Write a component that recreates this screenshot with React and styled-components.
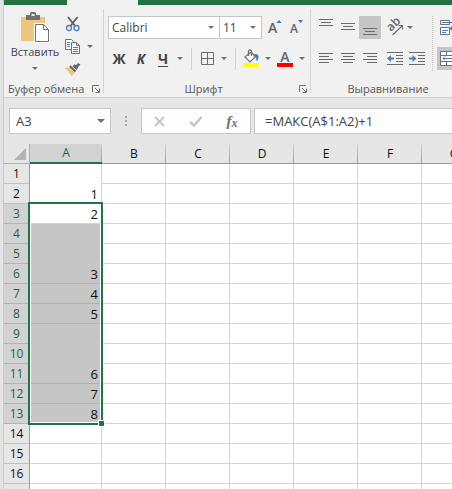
import { useState } from 'react';
import styled, { createGlobalStyle, css } from 'styled-components';

const GlobalStyle = createGlobalStyle`
  *, *::after {
    box-sizing: border-box;
  }

  body {
    margin: 0;
    background: #e4e4e4;
    font-family: "Open Sans", "Noto Sans", sans-serif;
    font-size: 12px;
    color: #444;
  }

  button, input, select {
    font: inherit;
    color: inherit;
  }

  svg {
    flex: none;
    overflow: visible;
  }
`;

const Window = styled.div`
  height: 100vh;
  margin-left: 3px;
  border-left: 1px solid #c8c8c8;
  overflow: hidden;
`;

const TabStrip = styled.div`
  display: flex;
  height: 5px;
  padding-left: 63px;
  background: #217346;
`;

const ActiveTab = styled.div`
  width: 71px;
  background: #f1f1f1;
`;

const Ribbon = styled.div`
  display: flex;
  background: #f1f1f1;
  border-bottom: 1px solid #d0d0d0;
  padding-top: 4px;
`;

const Group = styled.section`
  display: flex;
  flex-direction: column;
  flex: ${(props) => (props.$width ? 'none' : '1')};
  width: ${(props) => props.$width || 'auto'};
  height: 88px;
  padding: ${(props) => props.$padding || '7px 0 0 4px'};
  background: linear-gradient(#d4d4d4, #d4d4d4) right top / 1px 84px no-repeat;
`;

const GroupFooter = styled.div`
  display: flex;
  align-items: center;
  height: 16px;
  margin-top: auto;
  font-size: 11px;
  line-height: 16px;
  color: #555;
`;

const GroupLabel = styled.span`
  flex: 1;
  text-align: ${(props) => props.$align || 'center'};
  white-space: nowrap;
`;

const Body = styled.div`
  display: flex;
`;

const Rows = styled.div`
  display: flex;
  flex-direction: column;
  gap: 8px;
`;

const Row = styled.div`
  display: flex;
  align-items: center;
  height: 23px;
`;

const ToolButton = styled.button`
  display: flex;
  flex: none;
  align-items: center;
  justify-content: center;
  width: ${(props) => props.$width || '22px'};
  height: 23px;
  padding: 0;
  border: none;
  background: ${(props) => (props.$active ? '#c6c6c6' : 'transparent')};
  cursor: pointer;

  &:hover {
    background: #c6c6c6;
  }
`;

const LetterButton = styled(ToolButton)`
  font-size: 14px;
  font-weight: 700;
  line-height: 16px;
  font-style: ${(props) => (props.$italic ? 'italic' : 'normal')};
  text-decoration: ${(props) => (props.$underline ? 'underline' : 'none')};
  text-underline-offset: 2px;
`;

const Divider = styled.span`
  width: 1px;
  height: 22px;
  margin: 0 4px 0 5px;
  background: #d0d0d0;
`;

const DottedDivider = styled.span`
  height: 55px;
  margin: 0 4px;
  border-left: 1px dotted #c4c4c4;
`;

const PasteButton = styled.button`
  display: flex;
  flex-direction: column;
  align-items: center;
  width: 54px;
  height: 66px;
  padding: 0;
  border: none;
  background: none;
  font-size: 11px;
  line-height: 18px;
  cursor: pointer;

  svg:last-child {
    margin-top: 6px;
  }
`;

const ClipboardTools = styled.div`
  display: flex;
  flex-direction: column;
  width: 36px;
`;

const ClipboardRow = styled.div`
  display: flex;
  height: 23px;
`;

const Launcher = styled.button`
  display: flex;
  padding: 0;
  margin-right: 4px;
  border: none;
  background: none;
`;

const SelectBox = styled.label`
  position: relative;
  display: flex;
  align-items: center;
  width: ${(props) => props.$width};
  height: 23px;
  margin-right: ${(props) => (props.$joined ? '-1px' : '3px')};
  border: 1px solid #c6c6c6;
  background: #fff;

  select {
    width: 100%;
    padding: 0 0 0 3px;
    border: none;
    outline: none;
    background: none;
    appearance: none;
  }

  svg {
    position: absolute;
    right: 5px;
    pointer-events: none;
  }
`;

const FormulaBar = styled.div`
  display: flex;
  padding: 10px 0;
  background: #e6e6e6;
`;

const fieldBox = css`
  display: flex;
  align-items: center;
  height: 26px;
  border: 1px solid #c6c6c6;
  background: #fdfdfd;
`;

const NameBox = styled.div`
  ${fieldBox}
  width: 102px;
  margin-left: 5px;

  input {
    flex: 1;
    min-width: 0;
    padding: 0 0 0 6px;
    border: none;
    outline: none;
    background: none;
    font-size: 13px;
  }
`;

const Grip = styled.span`
  display: flex;
  justify-content: center;
  align-items: center;
  width: 30px;
`;

const FormulaTools = styled.div`
  ${fieldBox}
  width: 110px;
  justify-content: space-around;
`;

const FunctionButton = styled(ToolButton)`
  font: italic 700 15px "Liberation Serif", serif;
  color: #707070;

  small {
    font-size: 12px;
    margin-top: 4px;
  }
`;

const FormulaInput = styled.input`
  ${fieldBox}
  flex: 1;
  min-width: 0;
  margin-left: 3px;
  padding: 0 0 0 10px;
  border-right: none;
  outline: none;
  font-size: 13px;
`;

const Sheet = styled.div`
  position: relative;
  background: #fff;
`;

const Grid = styled.table`
  width: max-content;
  table-layout: fixed;
  border-collapse: separate;
  border-spacing: 0;
  font-size: 12px;
  line-height: 18px;
  color: #111;

  td, th {
    height: 20px;
    padding: 0;
    font-weight: 400;
  }
`;

const Corner = styled.th`
  width: 26px;
  background: #e6e6e6;
  border-right: 1px solid #b0b0b0;
  border-bottom: 1px solid #b0b0b0;

  svg {
    display: block;
    margin: 0 3px 0 auto;
  }
`;

const ColumnHead = styled.th`
  width: ${(props) => (props.$selected ? '72px' : '64px')};
  background: linear-gradient(#d0d0d0, #999) right / 1px 100% no-repeat
    ${(props) => (props.$selected ? '#d2d2d2' : '#e6e6e6')};
  border-bottom: ${(props) => (props.$selected ? '2px solid #217346' : '1px solid #999')};
  color: ${(props) => (props.$selected ? '#1e6440' : '#111')};
`;

const RowHead = styled.th`
  background: ${(props) => (props.$selected ? '#d2d2d2' : '#e6e6e6')};
  border-right: 1px solid #999;
  border-bottom: 1px solid ${(props) => (props.$selected ? '#b4b4b4' : '#c0c0c0')};
  color: ${(props) => (props.$selected ? '#1e6440' : '#111')};
`;

const Cell = styled.td`
  text-align: right;
  vertical-align: bottom;
  font-size: 13px;
  background: ${(props) => (props.$selected ? '#c6c6c6' : '#fff')};
  border-right: 1px solid #d4d4d4;
  border-bottom: 1px solid ${(props) => (props.$selected ? '#b0b0b0' : '#d4d4d4')};

  && {
    padding-right: 3px;
  }
`;

const Selection = styled.div`
  position: absolute;
  top: 58px;
  left: 24px;
  width: 75px;
  height: 223px;
  border: 2px solid #217346;
  box-shadow: inset 0 0 0 1px #fff;
  pointer-events: none;

  &::after {
    content: "";
    position: absolute;
    right: -4px;
    bottom: -4px;
    width: 7px;
    height: 7px;
    border: 1px solid #fff;
    background: #217346;
  }
`;

const Arrow = ({ size = 6 }) => (
  <svg width={size} height={size / 2} viewBox="0 0 6 3">
    <path d="M0 0h6L3 3z" fill="#707070" />
  </svg>
);

const Lines = ({ rows }) => (
  <svg width="14" height="17" viewBox="0 0 14 17" shapeRendering="crispEdges">
    {rows.map(([x, y, w]) => (
      <rect key={y} x={x} y={y} width={w} height="1" fill="#6a6a6a" />
    ))}
  </svg>
);

const PasteIcon = () => (
  <svg width="30" height="31" viewBox="0 0 30 31">
    <path d="M1 5h24v24H1z" fill="#edc780" />
    <path d="M6 8V3h4V1l1-1h4l1 1v2h4v5z" fill="#707070" />
    <path d="M11.500 2h3v2h-3z" fill="#f1f1f1" />
    <path d="M15.500 12.500h8l5 5v12h-13z" fill="#fff" stroke="#fff" strokeWidth="3" />
    <path d="M15.500 12.500h8l5 5v12h-13z" fill="#fff" stroke="#707070" />
    <path d="M23.500 12.500v5h5" fill="none" stroke="#707070" />
  </svg>
);

const ScissorsIcon = () => (
  <svg width="16" height="16" viewBox="0 0 16 16" fill="none">
    <path d="M3 1l7 9M12.500 1l-7 9" stroke="#666" strokeWidth="2" />
    <circle cx="4" cy="12" r="2.500" stroke="#4a7ebb" strokeWidth="1.300" />
    <circle cx="11.500" cy="12" r="2.500" stroke="#4a7ebb" strokeWidth="1.300" />
  </svg>
);

const CopyIcon = () => (
  <svg width="16" height="15" viewBox="0 0 16 15">
    <path d="M.5.5h6l2 2v8h-8z" fill="#fff" stroke="#707070" />
    <path d="M2 3.500h3M2 5.500h3M2 7.500h3" stroke="#4a7ebb" />
    <path d="M6.500 3.500h5l3 3v8h-8z" fill="#fff" stroke="#707070" />
    <path d="M11.500 3.500v3h3" fill="none" stroke="#707070" />
    <path d="M8 8.500h5M8 10.500h5M8 12.500h5" stroke="#4a7ebb" />
  </svg>
);

const BrushIcon = () => (
  <svg width="16" height="15" viewBox="0 0 17 15">
    <path d="M0 6l6-1 5 5-3 4-1 .5L4 11l-.5-1.500z" fill="#edc780" />
    <path d="M6 3l6 6-1.500 1.500-6-6z" fill="#666" />
    <path d="M8 4l2-2 1.500 1L14 .5 16.500 2.500 13.500 5l.5 1-2 2z" fill="#666" />
  </svg>
);

const LauncherIcon = () => (
  <svg width="8" height="8" viewBox="0 0 8 8" fill="none" stroke="#707070">
    <path d="M.5 7V.5H7M3 3l4 4M7.500 3.500v4h-4" />
  </svg>
);

const FontSizeIcon = ({ smaller }) => (
  <svg width="16" height="17" viewBox="0 0 16 17">
    <text x="0" y="14" fontSize={smaller ? 12 : 14} fontWeight="600" fill="#666">
      A
    </text>
    {smaller ? (
      <path d="M8 1h5l-2.500 3z" fill="#3f76b5" />
    ) : (
      <path d="M8.500 4h5L11 1z" fill="#3f76b5" />
    )}
  </svg>
);

const BordersIcon = () => (
  <svg width="13" height="13" viewBox="0 0 13 13" fill="none" stroke="#6a6a6a">
    <path d="M.5.5h12v12H.5zM6.500 1v11M1 6.500h11" />
  </svg>
);

const FillIcon = () => (
  <svg width="16" height="17" viewBox="0 0 16 17">
    <path d="M2 7l6-5 4.500 4.500L7 12z" fill="#fff" stroke="#707070" strokeWidth="1.200" />
    <path d="M5.500 6V1.500Q5.500 0 7 0t1.500 1.500V6" fill="none" stroke="#707070" strokeWidth="1.300" />
    <path d="M11.500 4q4-.5 4 3 0 3-2 4 0-4-3-5z" fill="#4a7ebb" />
    <path d="M0 13h16v4H0z" fill="#ff0" />
  </svg>
);

const FontColorIcon = () => (
  <svg width="16" height="17" viewBox="0 0 16 17">
    <text x="8" y="12" textAnchor="middle" fontSize="14" fontWeight="600" fill="#666">
      A
    </text>
    <path d="M0 13h16v4H0z" fill="#f00" />
  </svg>
);

const OrientationIcon = () => (
  <svg width="18" height="17" viewBox="0 0 18 17">
    <text transform="translate(5 13) rotate(-45)" fontSize="12" fontWeight="600" fill="#666">
      ab
    </text>
    <path d="M6.500 16L16 7M12.500 6.500H16.500V10.500" fill="none" stroke="#707070" strokeWidth="1.200" />
  </svg>
);

const IndentIcon = ({ increase }) => (
  <svg width="16" height="13" viewBox="0 0 16 13">
    <path d="M0 .5h16M9 3.500h7M9 6.500h7M9 9.500h7M0 12.500h16" stroke="#6a6a6a" />
    {increase ? (
      <path d="M7.500 6.500L3.500 3v2.500H0v2h3.500V10z" fill="#4a7ebb" />
    ) : (
      <path d="M0 6.500L4 3v2.500h3v2H4V10z" fill="#4a7ebb" />
    )}
  </svg>
);

const WrapIcon = () => (
  <svg width="18" height="15" viewBox="0 0 18 15">
    <path d="M.5.5h9v4h-9zM.5 7.500h9v7h-9z" fill="#fff" stroke="#707070" />
    <path d="M2 2.500h14v6h-4M2 10.500h6M2 12.500h4" fill="none" stroke="#4a7ebb" />
    <path d="M9.500 8.500L13 5v7z" fill="#4a7ebb" />
  </svg>
);

const MergeIcon = () => (
  <svg width="18" height="15" viewBox="0 0 18 15">
    <path d="M.5.5h17v14H.5z" fill="#fff" stroke="#707070" />
    <path d="M1 4.500h16M1 10.500h16M6.500 1v3M12.500 1v3M6.500 11v3M12.500 11v3" stroke="#707070" />
    <path d="M3 7.500h12M5 5.500l-2 2 2 2M13 5.500l2 2-2 2" fill="none" stroke="#4a7ebb" />
  </svg>
);

const GripIcon = () => (
  <svg width="2" height="10" viewBox="0 0 2 10" fill="#a8a8a8">
    <path d="M0 0h2v2H0zM0 4h2v2H0zM0 8h2v2H0z" />
  </svg>
);

const COLUMNS = ['A', 'B', 'C', 'D', 'E', 'F', 'G'];
const ROWS = Array.from({ length: 17 }, (_, i) => i + 1);

// column A, keyed by first row; span > 1 is a merged cell
const CELLS = {
  1: { value: 1, span: 2 },
  3: { value: 2, span: 1 },
  4: { value: 3, span: 3 },
  7: { value: 4, span: 1 },
  8: { value: 5, span: 1 },
  9: { value: 6, span: 3 },
  12: { value: 7, span: 1 },
  13: { value: 8, span: 1 },
  14: { span: 1 },
  15: { span: 1 },
  16: { span: 1 },
  17: { span: 1 },
};

const isSelected = (row) => row >= 3 && row <= 13;

const Clipboard = () => (
  <Group $width="100px" $padding="3px 0 0 4px">
    <Body>
      <PasteButton>
        <PasteIcon />
        Вставить
        <Arrow />
      </PasteButton>
      <ClipboardTools>
        <ClipboardRow>
          <ToolButton aria-label="Вырезать"><ScissorsIcon /></ToolButton>
        </ClipboardRow>
        <ClipboardRow>
          <ToolButton aria-label="Копировать"><CopyIcon /></ToolButton>
          <ToolButton $width="12px" aria-label="Варианты копирования"><Arrow /></ToolButton>
        </ClipboardRow>
        <ClipboardRow>
          <ToolButton aria-label="Формат по образцу"><BrushIcon /></ToolButton>
        </ClipboardRow>
      </ClipboardTools>
    </Body>
    <GroupFooter>
      <GroupLabel $align="left">Буфер обмена</GroupLabel>
      <Launcher aria-label="Буфер обмена"><LauncherIcon /></Launcher>
    </GroupFooter>
  </Group>
);

const Font = () => (
  <Group $width="207px">
    <Rows>
      <Row>
        <SelectBox $width="112px" $joined>
          <select aria-label="Шрифт" defaultValue="Calibri">
            <option>Calibri</option>
          </select>
          <Arrow />
        </SelectBox>
        <SelectBox $width="43px">
          <select aria-label="Размер шрифта" defaultValue="11">
            <option>11</option>
          </select>
          <Arrow />
        </SelectBox>
        <ToolButton aria-label="Увеличить размер"><FontSizeIcon /></ToolButton>
        <ToolButton aria-label="Уменьшить размер"><FontSizeIcon smaller /></ToolButton>
      </Row>
      <Row>
        <LetterButton>Ж</LetterButton>
        <LetterButton $italic>К</LetterButton>
        <LetterButton $underline>Ч</LetterButton>
        <ToolButton $width="12px" aria-label="Подчеркивание"><Arrow /></ToolButton>
        <Divider />
        <ToolButton aria-label="Границы"><BordersIcon /></ToolButton>
        <ToolButton $width="12px" aria-label="Варианты границ"><Arrow /></ToolButton>
        <Divider />
        <ToolButton aria-label="Цвет заливки"><FillIcon /></ToolButton>
        <ToolButton $width="12px" aria-label="Варианты заливки"><Arrow /></ToolButton>
        <ToolButton aria-label="Цвет текста"><FontColorIcon /></ToolButton>
        <ToolButton $width="12px" aria-label="Варианты цвета"><Arrow /></ToolButton>
      </Row>
    </Rows>
    <GroupFooter>
      <GroupLabel>Шрифт</GroupLabel>
      <Launcher aria-label="Параметры шрифта"><LauncherIcon /></Launcher>
    </GroupFooter>
  </Group>
);

const AlignGap = styled.span`
  width: 3px;
`;

const Alignment = () => (
  <Group>
    <Body>
      <Rows>
        <Row>
          <ToolButton aria-label="По верхнему краю">
            <Lines rows={[[0, 0, 14], [2, 3, 10], [0, 6, 14]]} />
          </ToolButton>
          <ToolButton aria-label="По середине">
            <Lines rows={[[0, 4, 14], [2, 7, 10], [0, 10, 14]]} />
          </ToolButton>
          <ToolButton $active aria-label="По нижнему краю">
            <Lines rows={[[0, 9, 14], [2, 12, 10], [0, 15, 14]]} />
          </ToolButton>
          <AlignGap />
          <ToolButton aria-label="Ориентация"><OrientationIcon /></ToolButton>
          <ToolButton $width="8px" aria-label="Варианты ориентации"><Arrow /></ToolButton>
        </Row>
        <Row>
          <ToolButton aria-label="По левому краю">
            <Lines rows={[[0, 3, 14], [0, 6, 10], [0, 9, 14], [0, 12, 10]]} />
          </ToolButton>
          <ToolButton aria-label="По центру">
            <Lines rows={[[0, 3, 14], [2, 6, 10], [0, 9, 14], [2, 12, 10]]} />
          </ToolButton>
          <ToolButton aria-label="По правому краю">
            <Lines rows={[[0, 3, 14], [4, 6, 10], [0, 9, 14], [4, 12, 10]]} />
          </ToolButton>
          <AlignGap />
          <ToolButton aria-label="Уменьшить отступ"><IndentIcon /></ToolButton>
          <ToolButton aria-label="Увеличить отступ"><IndentIcon increase /></ToolButton>
        </Row>
      </Rows>
      <DottedDivider />
      <Rows>
        <ToolButton $width="24px" aria-label="Переносить текст"><WrapIcon /></ToolButton>
        <ToolButton $width="24px" $active aria-label="Объединить"><MergeIcon /></ToolButton>
      </Rows>
    </Body>
    <GroupFooter>
      <GroupLabel>Выравнивание</GroupLabel>
    </GroupFooter>
  </Group>
);

const App = () => {
  const [name, setName] = useState('A3');
  const [formula, setFormula] = useState('=МАКС(A$1:A2)+1');

  return (
    <>
      <GlobalStyle />
      <Window>
        <TabStrip>
          <ActiveTab />
        </TabStrip>
        <Ribbon>
          <Clipboard />
          <Font />
          <Alignment />
        </Ribbon>
        <FormulaBar>
          <NameBox>
            <input aria-label="Имя" value={name} onChange={(e) => setName(e.target.value)} />
            <ToolButton $width="18px" aria-label="Список имен"><Arrow size={8} /></ToolButton>
          </NameBox>
          <Grip><GripIcon /></Grip>
          <FormulaTools>
            <ToolButton aria-label="Отмена">
              <svg width="12" height="11" viewBox="0 0 12 11">
                <path d="M1 1l9 9M10 1l-9 9" stroke="#c6c6c6" strokeWidth="2" />
              </svg>
            </ToolButton>
            <ToolButton aria-label="Ввод">
              <svg width="14" height="11" viewBox="0 0 14 11">
                <path d="M1 6l4 3.500L12.500 1" fill="none" stroke="#c6c6c6" strokeWidth="2.500" />
              </svg>
            </ToolButton>
            <FunctionButton aria-label="Вставить функцию">f<small>x</small></FunctionButton>
          </FormulaTools>
          <FormulaInput
            aria-label="Строка формул"
            value={formula}
            onChange={(e) => setFormula(e.target.value)}
          />
        </FormulaBar>
        <Sheet>
          <Grid>
            <thead>
              <tr>
                <Corner>
                  <svg width="12" height="12" viewBox="0 0 12 12">
                    <path d="M12 0v12H0z" fill="#b4b4b4" />
                  </svg>
                </Corner>
                {COLUMNS.map((col) => (
                  <ColumnHead key={col} $selected={col === 'A'}>{col}</ColumnHead>
                ))}
              </tr>
            </thead>
            <tbody>
              {ROWS.map((row) => (
                <tr key={row}>
                  <RowHead $selected={isSelected(row)}>{row}</RowHead>
                  {CELLS[row] && (
                    <Cell rowSpan={CELLS[row].span} $selected={isSelected(row) && row !== 3}>
                      {CELLS[row].value}
                    </Cell>
                  )}
                  {COLUMNS.slice(1).map((col) => (
                    <Cell key={col} />
                  ))}
                </tr>
              ))}
            </tbody>
          </Grid>
          <Selection />
        </Sheet>
      </Window>
    </>
  );
};

export default App;
